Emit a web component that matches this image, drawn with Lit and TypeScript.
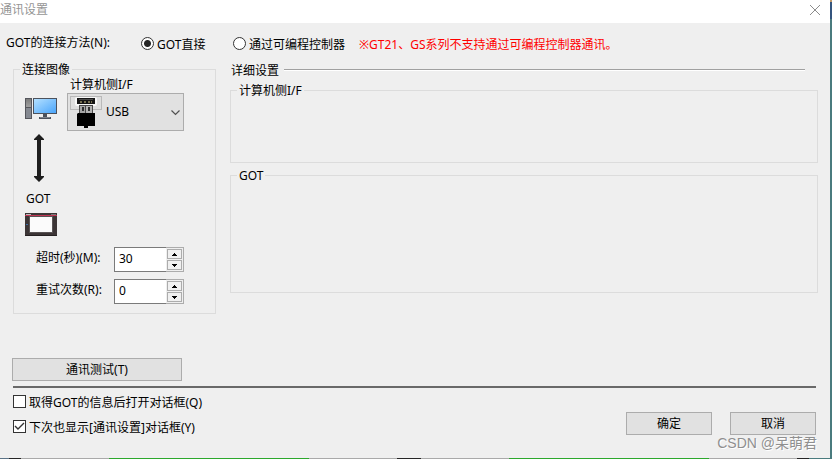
import { LitElement, html, css, svg } from "lit";
import { customElement, property, state } from "lit/decorators.js";

const pcIcon = html`<svg class="pc" width="32" height="22" viewBox="0 0 32 22" aria-hidden="true">
  <defs>
    <linearGradient id="scr" x1="0" y1="0" x2="1" y2="1">
      <stop offset="0" stop-color="#b4e0ff" /><stop offset="1" stop-color="#4aa5fb" />
    </linearGradient>
    <linearGradient id="tower" x1="0" y1="0" x2="0" y2="1">
      <stop offset="0" stop-color="#7c7c7c" /><stop offset="1" stop-color="#a0a0a0" />
    </linearGradient>
  </defs>
  <rect x="0" y="1" width="7" height="21" fill="#55565c" />
  <rect x="1" y="2" width="5" height="8" fill="url(#tower)" />
  <rect x="1" y="11" width="5" height="10" fill="#858991" />
  <rect x="8" y="1" width="24" height="16" fill="#4c525d" />
  <rect x="9" y="2" width="22" height="14" fill="url(#scr)" />
  <rect x="18" y="17" width="4" height="3" fill="#4c525d" />
  <rect x="14" y="20" width="12" height="2" fill="#4c525d" />
  <rect x="15" y="20" width="10" height="1" fill="#7d828b" />
</svg>`;

const usbIcon = html`<svg class="usb" width="32" height="33" viewBox="0 0 32 33" aria-hidden="true">
  <rect x="0.5" y="0.5" width="31" height="13" fill="#dedede" stroke="#b9b9b9" />
  <rect x="5" y="1" width="22" height="9" rx="2" fill="#f8f8f8" />
  <rect x="7" y="2" width="18" height="6" fill="#151515" />
  <rect x="9" y="3" width="14" height="1" fill="#4a4a4a" />
  <path d="M10 6h2M14 6h2M18 6h2M21 6h1" stroke="#d3c78c" stroke-width="1" />
  <rect x="9" y="9" width="14" height="9" fill="#4a4a4a" />
  <rect x="10" y="10" width="5" height="8" fill="#a5a5a5" />
  <rect x="16" y="10" width="6" height="8" fill="#b2b2b2" />
  <rect x="12" y="11" width="2" height="4" fill="#303030" />
  <rect x="18" y="11" width="2" height="4" fill="#303030" />
  <path d="M8 17h17v13h-7v2h-4v-2h-7V18z" fill="#000" />
</svg>`;

const linkIcon = html`<svg class="link" width="10" height="48" viewBox="0 0 10 48" aria-hidden="true">
  <path d="M5 0L10 5V6H7V42H10V43L5 48L0 43V42H3V6H0V5z" fill="#1e1e1e" />
</svg>`;

const gotIcon = html`<svg class="panel" width="32" height="23" viewBox="0 0 32 23" aria-hidden="true">
  <rect width="32" height="23" fill="#3c3536" />
  <rect x="0" y="22" width="32" height="1" fill="#262122" />
  <rect x="1" y="1" width="5" height="1" fill="#bcbcbc" />
  <rect x="26" y="1" width="5" height="1" fill="#777" />
  <rect x="0" y="2" width="32" height="1" fill="#c03554" />
  <rect x="4" y="3" width="24" height="17" fill="#585354" />
  <rect x="5" y="4" width="22" height="15" fill="#fbfbfb" />
  <rect x="1" y="11" width="2" height="1" fill="#3b6fa6" />
</svg>`;

const controls = css`
  * { box-sizing: border-box; }
  button, input, select { font: inherit; color: inherit; margin: 0; border-radius: 0; }
`;

@customElement("spin-box")
export class SpinBox extends LitElement {
  @property({ type: Number }) value = 0;
  @property() label = "";

  static styles = [controls, css`
    :host { display: flex; align-items: flex-start; }
    label { display: flex; }
    .name { width: 78px; line-height: 22px; white-space: nowrap; }
    .field {
      width: 52px; height: 25px; padding: 0 4px 2px; outline: none;
      border: 1px solid #7a7a7a; border-right: none; background: #fff;
    }
    .steps {
      display: flex; flex-direction: column; gap: 1px; width: 18px; height: 25px;
      padding: 1px; border: 1px solid #acacac; border-left: none;
    }
    .step {
      flex: 1; display: flex; align-items: center; justify-content: center;
      padding: 0; border: 1px solid #acacac; background: #f0f0f0; min-height: 0;
    }
    svg { display: block; }
  `];

  private bump(by: number) {
    this.value = Math.max(0, this.value + by);
  }

  private arrow(d: string) {
    return html`<svg width="5" height="3" viewBox="0 0 5 3">${svg`<path d=${d} fill="#000" />`}</svg>`;
  }

  render() {
    return html`
      <label>
        <span class="name">${this.label}</span>
        <input class="field" type="text" inputmode="numeric" .value=${String(this.value)} />
      </label>
      <div class="steps">
        <button class="step" aria-label="+" @click=${() => this.bump(1)}>${this.arrow("M2 0h1v1h1v1h1v1H0V2h1V1h1z")}</button>
        <button class="step" aria-label="-" @click=${() => this.bump(-1)}>${this.arrow("M0 0h5v1H4v1H3v1H2V2H1V1H0z")}</button>
      </div>
    `;
  }
}

@customElement("app-root")
export class AppRoot extends LitElement {
  @state() private route = "direct";

  static styles = [controls, css`
    :host {
      display: block; font: 12px/16px "Noto Sans", "Noto Sans CJK SC", sans-serif; color: #000;
    }
    .dialog {
      position: relative; display: flex; flex-direction: column; min-height: 100vh;
      background: #efefef; border-right: 2px solid #4a7b7e;
    }
    .title {
      display: flex; justify-content: space-between; align-items: center;
      height: 23px; background: #fff; color: #959595;
    }
    .title h1 { margin: 0 0 4px; font: inherit; }
    .close { display: flex; padding: 0; margin: 0 10px 3px 0; border: none; background: none; }
    .content { flex: 1; display: flex; flex-direction: column; padding-top: 11px; }
    .method {
      display: grid; grid-template-columns: 135px 92px 126px 1fr;
      padding-left: 6px; line-height: 18px; white-space: nowrap;
    }
    .choice { display: flex; gap: 3px; align-items: center; height: 18px; }
    .choice span { padding-top: 3px; }
    .note { color: #f00; padding-top: 2px; }
    .radio {
      appearance: none; width: 13px; height: 13px; flex: none;
      border: 1px solid #333; border-radius: 50%; background: #fff;
    }
    .radio:checked { background: radial-gradient(circle, #262626 3px, #fff 4px); }
    .columns { display: flex; align-items: flex-start; gap: 14px; margin-top: 7px; padding: 0 12px 0 13px; }
    fieldset { margin: 0; padding: 0; border: 1px solid #dcdcdc; min-width: 0; }
    legend { padding: 2px 2px 0; margin-left: 6px; line-height: 14px; }
    .image { width: 203px; padding: 0 11px 9px; flex: none; }
    .image legend { margin-left: -5px; }
    .wiring { display: grid; grid-template-columns: 32px 117px; column-gap: 10px; }
    .wiring svg { display: block; }
    .iflabel { grid-column: 2; padding-left: 3px; }
    .pc { margin-top: 4px; }
    .combo { position: relative; }
    .combo select {
      appearance: none; display: block; width: 100%; height: 38px; padding: 0 20px 0 38px;
      border: 1px solid #acacac; background: #e1e1e1; outline: none;
    }
    .usb { position: absolute; left: 3px; top: 3px; pointer-events: none; }
    .chevron { position: absolute; right: 4px; top: 17px; pointer-events: none; }
    .link { margin: 3px 0 9px 9px; }
    .target { padding-left: 1px; }
    .panel { margin: 6px 0 11px; }
    .spins { display: flex; flex-direction: column; gap: 7px; padding-left: 11px; }
    .detail { flex: 1; display: flex; flex-direction: column; }
    .heading { display: flex; align-items: center; gap: 5px; margin: 0 13px 4px 1px; padding-top: 1px; }
    .heading h2 { margin: 0; padding-top: 2px; font: inherit; line-height: 14px; }
    .heading hr { flex: 1; margin: 0; border: none; border-top: 1px solid #a0a0a0; border-bottom: 1px solid #fff; }
    .pcside { min-height: 81px; margin-bottom: 4px; }
    .gotside { min-height: 126px; }
    .push { height: 23px; padding: 1px 0 0; border: 1px solid #acacac; background: #e1e1e1; text-align: center; }
    .test { width: 170px; margin: 44px 0 5px 12px; }
    .rule { width: auto; height: 2px; margin: 0 14px 6px 13px; border: none; background: #696969; }
    .foot { display: flex; justify-content: space-between; align-items: flex-end; padding: 0 14px 0 13px; }
    .checks { display: flex; flex-direction: column; gap: 8px; }
    .check { display: flex; gap: 3px; align-items: flex-start; }
    .check span { padding-top: 1px; }
    .tick {
      appearance: none; width: 13px; height: 13px; flex: none; margin-top: 1px;
      border: 1px solid #333; background: #fff;
    }
    .tickbox { display: grid; }
    .tickbox > * { grid-area: 1 / 1; }
    .tickbox svg { margin: 1px 0 0; pointer-events: none; visibility: hidden; }
    .tick:checked + svg { visibility: visible; }
    .actions { display: flex; gap: 18px; padding-bottom: 1px; }
    .actions .push { width: 86px; }
    .mark {
      position: absolute; right: 13px; bottom: 7px; color: #8f8f8f; pointer-events: none;
      font: 14px/18px "Liberation Sans", "Noto Sans CJK SC", sans-serif; text-shadow: 1px 1px 0 #fff;
    }
    .strip {
      height: 1px;
      background:
        linear-gradient(#5c7386, #5c7386) 0 0 / 9px 1px no-repeat,
        linear-gradient(#4a7b7e, #4a7b7e) 100% 0 / 21px 1px no-repeat,
        repeating-linear-gradient(90deg, #262626 0 21px, #a9a9a9 21px 109px, #2ca82c 109px 309px, #a9a9a9 309px 397px, #262626 397px 400px);
    }
    .edge {
      position: absolute; right: -2px; top: 0; width: 2px; height: 19px;
      background: linear-gradient(#c09a6c 2px, #34557e 2px);
    }
  `];

  private check(label: string, checked: boolean) {
    return html`<label class="check">
      <div class="tickbox">
        <input class="tick" type="checkbox" .checked=${checked} />
        <svg width="13" height="13" viewBox="0 0 13 13"><path d="M2 6L5 9L11 3" fill="none" stroke="#333" stroke-width="1.4" /></svg>
      </div>
      <span>${label}</span>
    </label>`;
  }

  private radio(value: string, label: string) {
    return html`<label class="choice">
      <input class="radio" type="radio" name="route" value=${value}
        .checked=${this.route === value} @change=${() => (this.route = value)} />
      <span>${label}</span>
    </label>`;
  }

  render() {
    return html`
      <div class="dialog">
        <header class="title">
          <h1>通讯设置</h1>
          <button class="close" aria-label="关闭">
            <svg width="10" height="10" viewBox="0 0 10 10"><path d="M0 0L10 10M10 0L0 10" stroke="#8c8c8c" /></svg>
          </button>
        </header>
        <main class="content">
          <div class="method">
            <span>GOT的连接方法(N):</span>
            ${this.radio("direct", "GOT直接")}
            ${this.radio("plc", "通过可编程控制器")}
            <span class="note">※GT21、GS系列不支持通过可编程控制器通讯。</span>
          </div>
          <div class="columns">
            <fieldset class="image">
              <legend>连接图像</legend>
              <div class="wiring">
                <label class="iflabel" for="iface">计算机侧I/F</label>
                ${pcIcon}
                <div class="combo">
                  <select id="iface"><option>USB</option></select>
                  ${usbIcon}
                  <svg class="chevron" width="9" height="6" viewBox="0 0 9 6"><path d="M0.5 0.5L4.5 4.5L8.5 0.5" fill="none" stroke="#505050" stroke-width="1.2" /></svg>
                </div>
              </div>
              <div class="wiring">${linkIcon}</div>
              <div class="target">GOT</div>
              <div class="wiring">${gotIcon}</div>
              <div class="spins">
                <spin-box label="超时(秒)(M):" .value=${30}></spin-box>
                <spin-box label="重试次数(R):" .value=${0}></spin-box>
              </div>
            </fieldset>
            <section class="detail">
              <div class="heading"><h2>详细设置</h2><hr /></div>
              <fieldset class="pcside"><legend>计算机侧I/F</legend></fieldset>
              <fieldset class="gotside"><legend>GOT</legend></fieldset>
            </section>
          </div>
          <button class="push test">通讯测试(T)</button>
          <hr class="rule" />
          <div class="foot">
            <div class="checks">
              ${this.check("取得GOT的信息后打开对话框(Q)", false)}
              ${this.check("下次也显示[通讯设置]对话框(Y)", true)}
            </div>
            <div class="actions">
              <button class="push">确定</button>
              <button class="push">取消</button>
            </div>
          </div>
        </main>
        <div class="mark">CSDN @呆萌君</div>
        <div class="edge"></div>
        <div class="strip"></div>
      </div>
    `;
  }
}
